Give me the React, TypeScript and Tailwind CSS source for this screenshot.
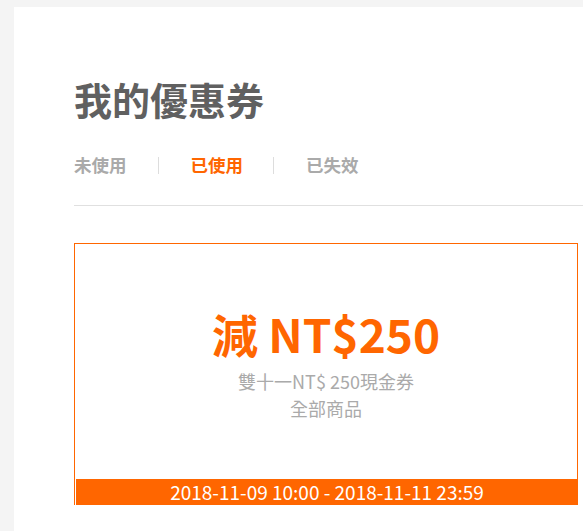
import React from "react";

const font = { fontFamily: '"Noto Sans CJK TC", "Noto Sans", sans-serif' };

export default function App() {
  return (
    <div className="min-h-screen bg-[#f4f4f4] pt-[7px] pl-[14px]" style={font}>
      <div className="min-h-[524px] bg-white pl-[60px] pt-[66px]">
        <h1 className="text-[38px] leading-[52px] font-bold text-[#606060]">我的優惠券</h1>
        <div className="mt-[30px] flex items-center border-b border-[#e0e0e0] pb-[30px]">
          <span className="text-[17.5px] leading-[20px] font-bold text-[#aaaaaa] pr-[31px]">未使用</span>
          <span className="h-[17px] w-px bg-[#dddddd]" />
          <span className="text-[17.5px] leading-[20px] font-bold text-[#ff6600] pl-[32px] pr-[30px]">已使用</span>
          <span className="h-[17px] w-px bg-[#dddddd]" />
          <span className="text-[17.5px] leading-[20px] font-bold text-[#aaaaaa] pl-[32px]">已失效</span>
        </div>
        <div className="mt-[37px] w-[504px] border-l border-t border-r border-[#ff6600]">
          <div className="flex h-[235px] flex-col items-center pt-[66px]">
            <div className="text-[46px] leading-[46px] font-bold text-[#ff6600]">減 NT$250</div>
            <div className="mt-[12px] text-center text-[18px] leading-[27px] text-[#aaaaaa]">
              <div>雙十一NT$ 250現金券</div>
              <div>全部商品</div>
            </div>
          </div>
          <div className="ml-px -mr-px flex h-[26px] items-center justify-center bg-[#ff6600] text-[19px] text-white">
            2018-11-09 10:00 - 2018-11-11 23:59
          </div>
        </div>
      </div>
    </div>
  );
}
